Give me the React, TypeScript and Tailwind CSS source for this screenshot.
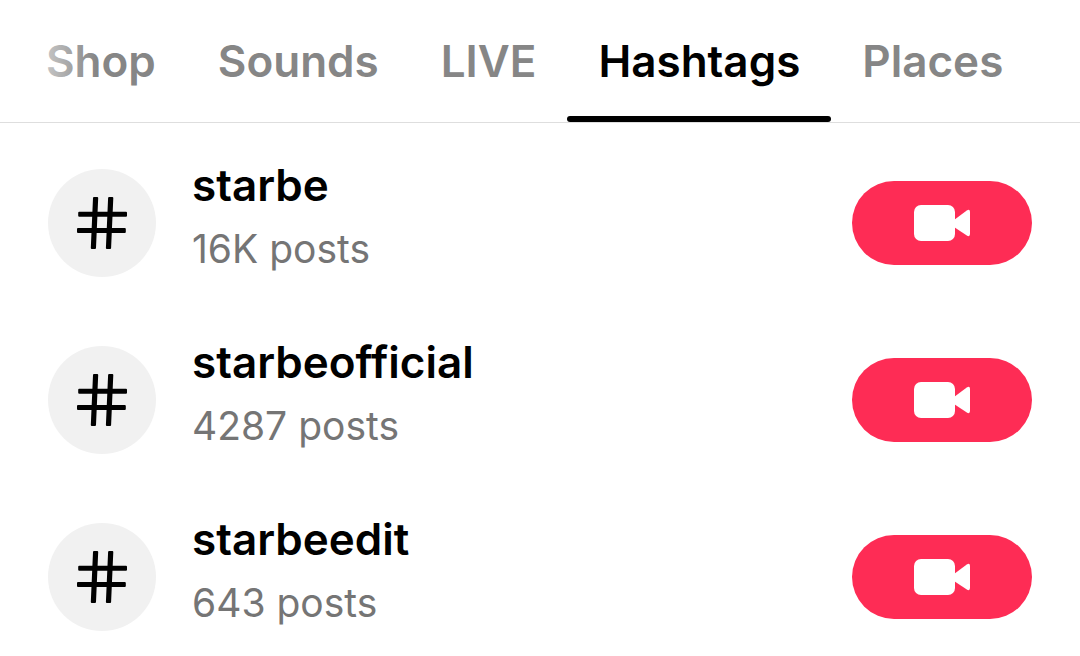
const tabs = ["Shop", "Sounds", "LIVE", "Hashtags", "Places"];

const hashtags = [
  { name: "starbe", posts: "16K" },
  { name: "starbeofficial", posts: "4287" },
  { name: "starbeedit", posts: "643" },
];

const HashIcon = () => (
  <svg
    width="50"
    height="54"
    viewBox="0 0 50 54"
    fill="black"
    stroke="black"
    strokeWidth="2"
    strokeLinejoin="round"
    aria-hidden="true"
  >
    <path d="M17 2h3.2l-2.2 50h-3.2z" />
    <path d="M32.1 2h3.2l-2.2 50h-3.2z" />
    <path d="M2.2 16.8h46.8v3H2.2z" />
    <path d="M1 33h46.8v3H1z" />
  </svg>
);

const CameraIcon = () => (
  <svg width="56" height="36" viewBox="0 0 56 36" fill="white" aria-hidden="true">
    <rect width="41" height="36" rx="7" />
    <path d="M40 15 52.8 5.4Q56 3.8 56 7V29Q56 32.2 52.8 30.6L40 22Z" />
  </svg>
);

const TabBar = () => (
  <nav className="relative overflow-hidden border-b border-[#dedede] pl-[15px]">
    <div className="flex">
      {tabs.map((tab) => {
        const active = tab === "Hashtags";
        return (
          <button
            key={tab}
            type="button"
            aria-current={active ? "page" : undefined}
            className={`flex shrink-0 flex-col text-[44px] leading-[60px] font-semibold ${
              active ? "text-black" : "text-[#868686]"
            }`}
          >
            <span className="px-[31px] pt-[31px] pb-[25px]">{tab}</span>
            {active && <span className="h-[6px] w-full rounded-full bg-black" />}
          </button>
        );
      })}
    </div>
    <div className="pointer-events-none absolute inset-y-0 left-0 w-24 bg-linear-to-r from-white to-white/0" />
  </nav>
);

const HashtagRow = ({ name, posts }: { name: string; posts: string }) => (
  <li className="flex h-[177px] items-center px-12">
    <div className="flex size-[108px] shrink-0 items-center justify-center rounded-full bg-[#f1f1f1]">
      <HashIcon />
    </div>
    <div className="ml-9 min-w-0 flex-1 pb-3">
      <h2 className="text-[44px] leading-16 font-semibold text-black">{name}</h2>
      <p className="text-[39px] leading-16 text-[#757575]">{posts} posts</p>
    </div>
    <button
      type="button"
      aria-label={`Record a video with #${name}`}
      className="flex h-[84px] w-[180px] shrink-0 items-center justify-center rounded-full bg-[#fe2c55]"
    >
      <CameraIcon />
    </button>
  </li>
);

export default function App() {
  return (
    <div className="min-h-screen bg-white font-['Inter',sans-serif]">
      <TabBar />
      <ul className="pt-[11px]">
        {hashtags.map((hashtag) => (
          <HashtagRow key={hashtag.name} {...hashtag} />
        ))}
      </ul>
    </div>
  );
}
